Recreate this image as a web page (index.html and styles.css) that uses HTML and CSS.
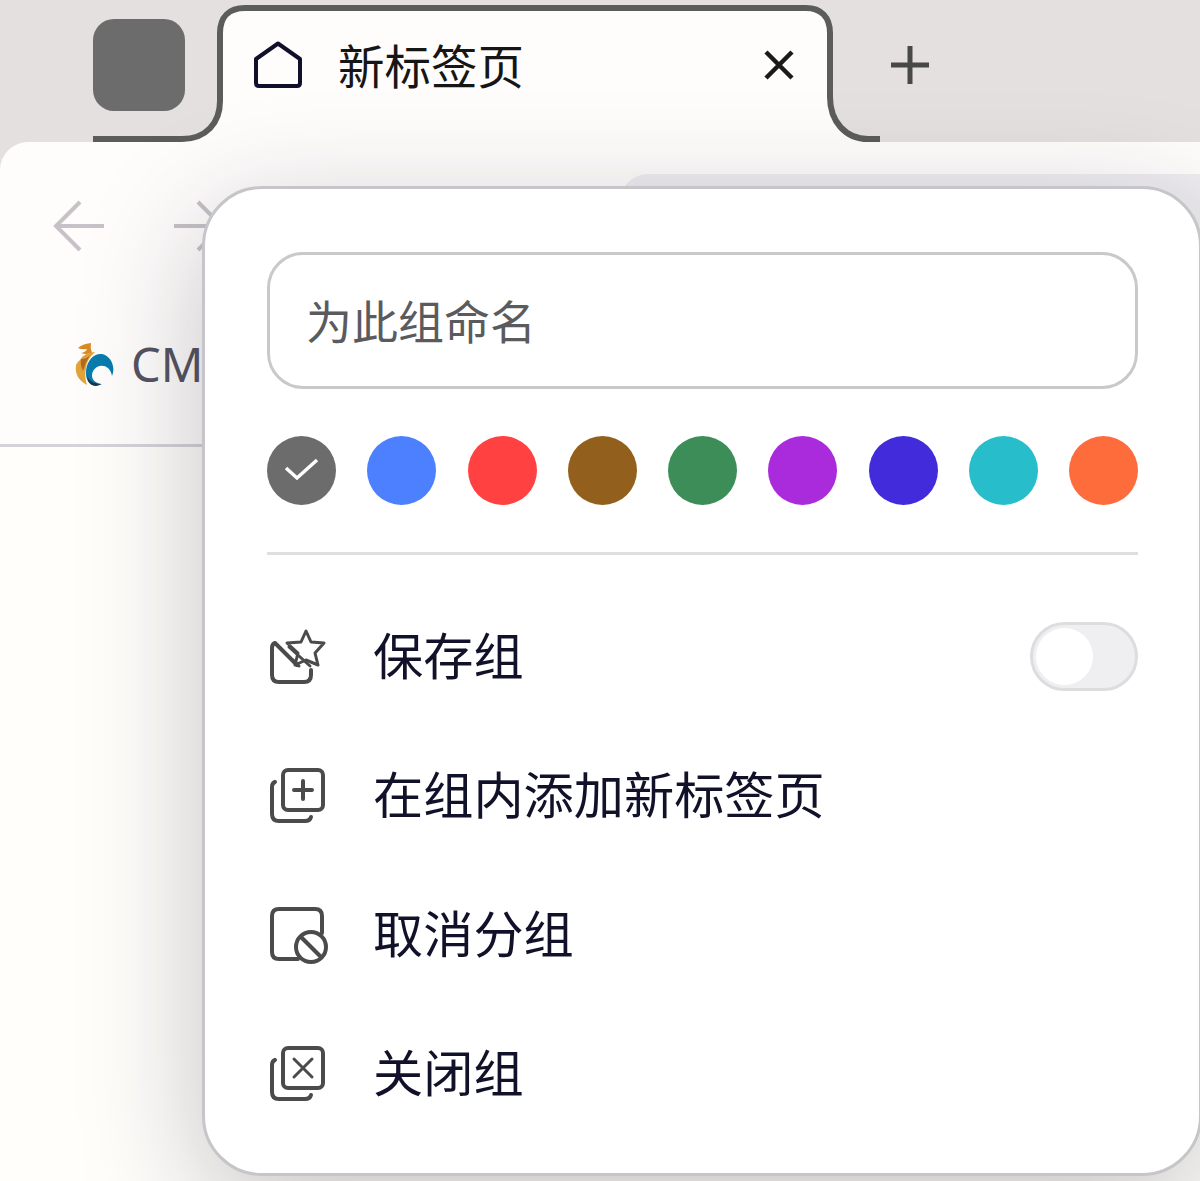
FILE: index.html
```
<!DOCTYPE html>
<html lang="zh-CN">

<head>
    <meta charset="UTF-8">
    <meta name="viewport" content="width=device-width, initial-scale=1.0">
    <title>新标签页</title>
    <link rel="stylesheet" href="styles.css">
</head>

<body>
    <div class="browser">
        <!-- 标签栏 -->
        <div class="tabs">
            <svg class="tabs-line" width="1200" height="146" viewBox="0 0 1200 146">
                <path d="M185 146V139C207 139 220 124 220 101V33C220 17 229 8 245 8H806C821 8 830 17 830 33V97C830 122 846 139 868 139H880V146Z" fill="#fffdfc" />
                <path d="M93 139H182C206 139 220 123 220 101V33C220 17 229 8 245 8H806C821 8 830 17 830 33V97C830 122 846 139 868 139H880" fill="none" stroke="#5c5c5c" stroke-width="6" />
            </svg>
            <div class="group"></div>
            <div class="tab">
                <svg class="home" width="50" height="50" viewBox="0 0 50 50">
                    <path d="M3 19L25 3.500L47 19V43Q47 46 44 46H6Q3 46 3 43Z" />
                </svg>
                <span class="title">新标签页</span>
                <svg class="close" width="32" height="32" viewBox="0 0 32 32">
                    <path d="M3 3L29 29M29 3L3 29" />
                </svg>
            </div>
            <svg class="plus" width="40" height="40" viewBox="0 0 40 40">
                <path d="M20 1V39M1 20H39" />
            </svg>
        </div>
        <!-- 工具栏 -->
        <div class="toolbar">
            <div class="nav">
                <svg class="arrow" width="52" height="52" viewBox="0 0 52 52">
                    <path d="M51 26H3M27 2L3 26L27 50" />
                </svg>
                <svg class="arrow" width="52" height="52" viewBox="0 0 52 52">
                    <path d="M1 26H49M25 2L49 26L25 50" />
                </svg>
                <div class="address"></div>
            </div>
            <div class="bookmarks">
                <svg width="44" height="48" viewBox="0 0 44 48">
                    <path d="M5 8Q9 4 18 3Q17 8 19 13Q13 15 8 13Q13 12 14 9Q9 10 5 8Z" fill="#d98a25" />
                    <path d="M7 20Q12 12 22 12Q14 19 13 28Q11 36 14 45Q1 38 3 25Q4 22 7 20Z" fill="#e2a33b" />
                    <path d="M8 19Q14 19 17 15Q12 23 10 31Q7 25 8 19Z" fill="#b66a20" />
                    <path d="M13 31C14 20 21 13 29 14C38 16 43 27 39 36C37 24 25 23 20 31C17 38 21 43 29 44C19 49 12 42 13 31Z" fill="#087cad" />
                    <path d="M14 34Q15 43 28 44Q20 49 15 41Z" fill="#173850" />
                </svg>
                <span>CM</span>
            </div>
        </div>
        <div class="page"></div>
    </div>

    <!-- 标签组弹窗 -->
    <div class="popup">
        <input class="name" type="text" placeholder="为此组命名">
        <div class="colors">
            <span class="dot gray">
                <svg width="36" height="26" viewBox="0 0 36 26">
                    <path d="M2 10L13 20L33 2" />
                </svg>
            </span>
            <span class="dot blue"></span>
            <span class="dot red"></span>
            <span class="dot brown"></span>
            <span class="dot green"></span>
            <span class="dot purple"></span>
            <span class="dot indigo"></span>
            <span class="dot cyan"></span>
            <span class="dot orange"></span>
        </div>
        <div class="menu">
            <div class="item">
                <svg class="icon" width="60" height="60" viewBox="0 0 60 60">
                    <path d="M7 16Q4 17 4 21V48Q4 55 11 55H36Q43 55 43 48V43M7 16L29 38" />
                    <path class="thin" d="M38 4L43 15L56 16L47 26L50 38L38 33L27 38L30 26L19 16L33 15Z" />
                    <path class="thin" d="M21 20L42 39M25 33L31 39" />
                </svg>
                <span>保存组</span>
                <span class="switch"></span>
            </div>
            <div class="item">
                <svg class="icon" width="60" height="60" viewBox="0 0 60 60">
                    <rect x="15" y="4" width="40" height="40" rx="5" />
                    <path d="M7 16Q4 17 4 21V48Q4 55 11 55H37Q42 55 43 51M35 15V33M26 24H44" />
                </svg>
                <span>在组内添加新标签页</span>
            </div>
            <div class="item">
                <svg class="icon" width="60" height="60" viewBox="0 0 60 60">
                    <path d="M30 54H11Q4 54 4 47V11Q4 4 11 4H47Q54 4 54 11V28" />
                    <circle cx="43" cy="42" r="15" />
                    <path d="M33 32L53 52" />
                </svg>
                <span>取消分组</span>
            </div>
            <div class="item">
                <svg class="icon" width="60" height="60" viewBox="0 0 60 60">
                    <rect x="15" y="4" width="40" height="40" rx="5" />
                    <path d="M7 16Q4 17 4 21V48Q4 55 11 55H37Q42 55 43 51" />
                    <path class="thin" d="M26 15L44 33M44 15L26 33" />
                </svg>
                <span>关闭组</span>
            </div>
        </div>
    </div>
</body>

</html>
```
FILE: styles.css
```
* {
    box-sizing: border-box;
}

html,
body {
    margin: 0;
    height: 1181px;
    overflow: hidden;
}

body {
    position: relative;
    font-family: "Noto Sans", "Noto Sans CJK SC", sans-serif;
    background: #e3e0df;
}

svg {
    display: block;
    flex: none;
    fill: none;
}

.browser {
    display: flex;
    flex-direction: column;
    height: 1181px;
}

.tabs {
    position: relative;
    z-index: 1;
    display: flex;
    align-items: center;
    height: 142px;
    padding: 0 0 12px 93px;
}

.tabs-line {
    position: absolute;
    left: 0;
    top: 0;
}

.group {
    width: 92px;
    height: 92px;
    border-radius: 21px;
    background: #6c6c6c;
}

.tab {
    position: relative;
    display: flex;
    align-items: center;
    width: 610px;
    margin-left: 35px;
    padding: 0 35px 0 33px;
}

.home {
    stroke: #11102a;
    stroke-width: 4;
    stroke-linejoin: round;
}

.title {
    flex: 1;
    margin-left: 35px;
    padding-bottom: 3px;
    font: 46.5px/70px "Noto Sans CJK SC", sans-serif;
    color: #161616;
}

.close {
    stroke: #1a1a1a;
    stroke-width: 4.5;
}

.plus {
    margin-left: 60px;
    stroke: #484848;
    stroke-width: 5;
}

.toolbar {
    height: 305px;
    border-bottom: 3px solid #d5d3d9;
    border-top-left-radius: 28px;
    background: #fffdfc;
}

.nav {
    display: flex;
    align-items: center;
    height: 168px;
    padding-left: 53px;
    gap: 68px;
}

.arrow {
    stroke: #c6c2c7;
    stroke-width: 4;
}

.address {
    flex: 1;
    height: 104px;
    margin-left: 327px;
    border-radius: 28px 0 0 28px;
    background: #efedf0;
}

.bookmarks {
    display: flex;
    align-items: center;
    height: 108px;
    padding-left: 73px;
    gap: 14px;
    font-size: 47px;
    color: #555462;
}

.page {
    flex: 1;
    background: #fffefb;
}

.popup {
    position: absolute;
    z-index: 2;
    left: 202px;
    top: 186px;
    width: 1000px;
    height: 990px;
    padding: 65px 62px 0 62px;
    border: 3px solid #c6c5ca;
    border-radius: 60px;
    background: #fff;
    box-shadow: 0 32px 120px rgba(20, 20, 32, .25);
}

.name {
    display: block;
    width: 871px;
    height: 137px;
    margin-top: -2px;
    padding: 0 0 4px 36px;
    border: 3px solid #c9c9ca;
    border-radius: 36px;
    outline: none;
    font: 46px "Noto Sans CJK SC", sans-serif;
    background: #fff;
}

.name::placeholder {
    color: #5b5b5e;
    opacity: 1;
}

.colors {
    display: flex;
    justify-content: space-between;
    width: 871px;
    height: 166px;
    padding-top: 47px;
    border-bottom: 3px solid #dfdfe0;
}

.dot {
    display: flex;
    align-items: center;
    justify-content: center;
    width: 69px;
    height: 69px;
    border-radius: 50%;
}

.dot svg {
    stroke: #fff;
    stroke-width: 3.5;
}

.gray {
    background: #6c6c6c;
}

.blue {
    background: #4c80ff;
}

.red {
    background: #ff4141;
}

.brown {
    background: #935f1c;
}

.green {
    background: #3d8d58;
}

.purple {
    background: #a92bdb;
}

.indigo {
    background: #422bdb;
}

.cyan {
    background: #27bdca;
}

.orange {
    background: #ff6c3c;
}

.menu {
    width: 871px;
    padding-top: 32px;
}

.item {
    display: flex;
    align-items: center;
    height: 139px;
    padding-left: 1px;
    font: 50.2px/70px "Noto Sans CJK SC", sans-serif;
    color: #11112a;
}

.item span:not(.switch) {
    padding-bottom: 7px;
}

.icon {
    margin-right: 45px;
    stroke: #4b4b4b;
    stroke-width: 4;
    stroke-linejoin: round;
    stroke-linecap: round;
}

.thin {
    stroke-width: 3;
}

.switch {
    width: 108px;
    height: 69px;
    margin-left: auto;
    padding: 3px;
    border: 3px solid #dddde0;
    border-radius: 35px;
    background: #efeff2;
}

.switch::before {
    content: "";
    display: block;
    width: 57px;
    height: 57px;
    border-radius: 50%;
    background: #fff;
}
```
